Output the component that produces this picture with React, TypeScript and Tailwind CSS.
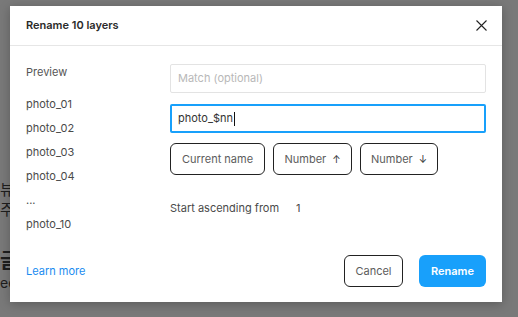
import React from 'react'

const previewNames = ['photo_01', 'photo_02', 'photo_03', 'photo_04', '...', 'photo_10']

const TokenButton = ({ label, arrow, width }: { label: string; arrow?: 'up' | 'down'; width: string }) => (
    <button className={`h-8 ${width} rounded-md border border-[#222] bg-white text-[11px] text-[#5c5c5c] flex items-center justify-center gap-[6px]`}>
        <span>{label}</span>
        {arrow === 'up' && <span className="text-[#333] text-[10px]">↑</span>}
        {arrow === 'down' && <span className="text-[#333] text-[10px]">↓</span>}
    </button>
)

export default function App() {
    return (
        <div className="relative w-[518px] h-[317px] overflow-hidden bg-[#797979]" style={{ fontFamily: 'Inter, "Noto Sans CJK KR", sans-serif' }}>
            {/* page behind the overlay */}
            <div className="flex flex-col pt-[180px] text-[#1e1e1e]">
                <span className="text-[15px] leading-[20px]">뷰</span>
                <span className="text-[15px] leading-[20px]">주</span>
                <span className="mt-[28px] text-[20px] font-bold leading-[26px]">글</span>
                <span className="text-[14px] leading-[18px]">ee</span>
            </div>

            {/* dialog */}
            <div className="absolute left-[10px] top-[6px] w-[492px] h-[296px] bg-white shadow-[0_2px_10px_rgba(0,0,0,0.25)] flex flex-col text-[11px] text-[#333]">
                <div className="h-[40px] shrink-0 flex items-center justify-between px-4 border-b border-[#e6e6e6]">
                    <span className="font-semibold text-[#2a2a2a]">Rename 10 layers</span>
                    <svg width="11" height="11" viewBox="0 0 11 11" className="mr-[-1px]">
                        <path d="M0.5 0.5L10.5 10.5M10.5 0.5L0.5 10.5" stroke="#222" strokeWidth="1.1" />
                    </svg>
                </div>

                <div className="flex-1 flex px-4 pt-[18px]">
                    <div className="w-[144px] shrink-0 text-[#4a4a4a]">
                        <div className="leading-4 text-[#555]">Preview</div>
                        <ul className="mt-3">
                            {previewNames.map((name) => (
                                <li key={name} className="h-6 leading-6">{name}</li>
                            ))}
                        </ul>
                    </div>

                    <div className="flex-1 flex flex-col">
                        <div className="h-[29px] rounded-[2px] border border-[#e3e3e3] flex items-center px-[7px] text-[#b8b8b8]">
                            Match (optional)
                        </div>
                        <div className="mt-[11px] h-[29px] rounded-[2px] border-2 border-[#18a0fb] flex items-center px-[6px] text-[#333]">
                            photo_$nn<span className="inline-block w-px h-[14px] bg-[#111] ml-px" />
                        </div>
                        <div className="mt-[10px] flex gap-2">
                            <TokenButton label="Current name" width="w-[95px]" />
                            <TokenButton label="Number" arrow="up" width="w-[79px]" />
                            <TokenButton label="Number" arrow="down" width="w-[78px]" />
                        </div>
                        <div className="mt-[25px] flex leading-4 text-[#4a4a4a]">
                            <span className="w-[126px]">Start ascending from</span>
                            <span>1</span>
                        </div>
                    </div>
                </div>

                <div className="flex items-center justify-between px-4 pb-[15px]">
                    <span className="text-[#1a8cf0]">Learn more</span>
                    <div className="flex gap-4">
                        <button className="h-8 w-[59px] rounded-md border border-[#222] bg-white text-[#5c5c5c]">Cancel</button>
                        <button className="h-8 w-[67px] rounded-md bg-[#18a0fb] text-white font-semibold">Rename</button>
                    </div>
                </div>
            </div>
        </div>
    )
}
